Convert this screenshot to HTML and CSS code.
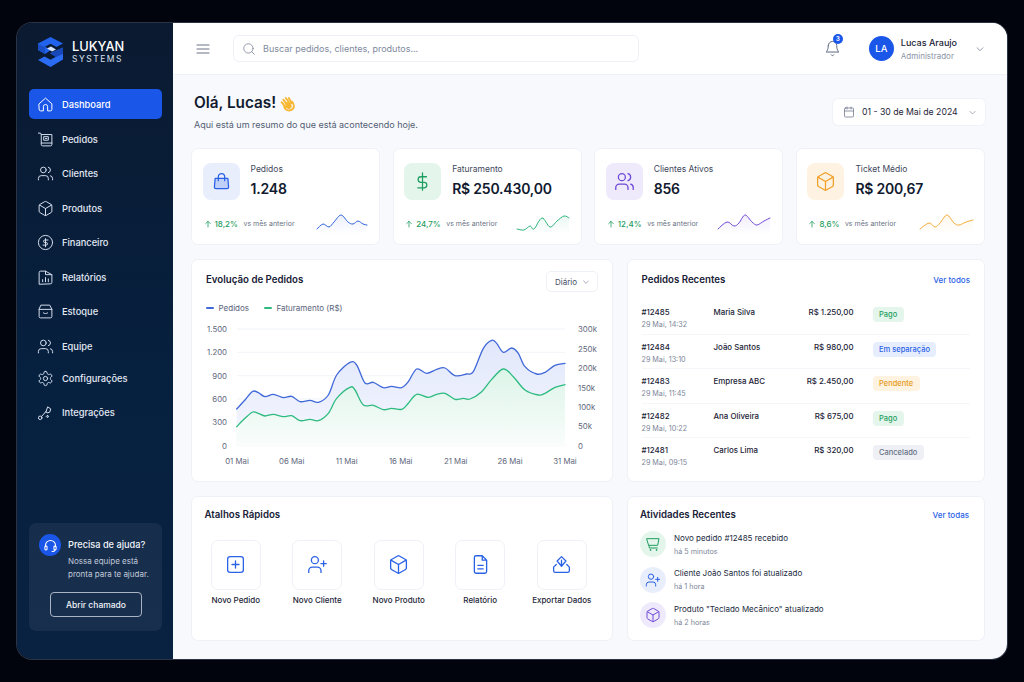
FILE: index.html
```html
<!DOCTYPE html>
<html lang="pt-BR">
<head>
  <meta charset="UTF-8">
  <meta name="viewport" content="width=device-width, initial-scale=1.0">
  <title>Lukyan Systems - Dashboard</title>
  <link rel="stylesheet" href="styles.css">
</head>
<body>
  <svg class="icon-defs" width="0" height="0" aria-hidden="true">
    <symbol id="i-home" viewBox="0 0 24 24"><path d="M3 11 12 3l9 8v8a2 2 0 0 1-2 2h-4v-6a3 3 0 0 0-6 0v6H5a2 2 0 0 1-2-2z"/></symbol>
    <symbol id="i-orders" viewBox="0 0 24 24"><path d="M2 3h3l1 2h15v14a2 2 0 0 1-2 2H8a2 2 0 0 1-2-2V5M6 17h15M10 8h6v5h-6zM12 10.500h2"/></symbol>
    <symbol id="i-users" viewBox="0 0 24 24"><path d="M16 21v-2a4 4 0 0 0-4-4H6a4 4 0 0 0-4 4v2"/><circle cx="9" cy="7" r="4"/><path d="M22 21v-2a4 4 0 0 0-3-3.870M16 3.130a4 4 0 0 1 0 7.750"/></symbol>
    <symbol id="i-box" viewBox="0 0 24 24"><path d="M21 8a2 2 0 0 0-1-1.730l-7-4a2 2 0 0 0-2 0l-7 4A2 2 0 0 0 3 8v8a2 2 0 0 0 1 1.730l7 4a2 2 0 0 0 2 0l7-4A2 2 0 0 0 21 16Z"/><path d="M3.300 7 12 12l8.700-5M12 22V12"/></symbol>
    <symbol id="i-money" viewBox="0 0 24 24"><circle cx="12" cy="12" r="10"/><path d="M15.500 8.500H11a1.800 1.800 0 0 0 0 3.600h2a1.800 1.800 0 0 1 0 3.600H8.500M12 18V6.500"/></symbol>
    <symbol id="i-report" viewBox="0 0 24 24"><path d="M3 21V5a2 2 0 0 1 2-2h7v5h9v11a2 2 0 0 1-2 2zM12 3l9 5M8 18v-3M12 18v-6M16 18v-4"/></symbol>
    <symbol id="i-stock" viewBox="0 0 24 24"><path d="M6 3h12l3 6v10a2 2 0 0 1-2 2H5a2 2 0 0 1-2-2V9zM3 9h18M9 14c1.500 1.300 4.500 1.300 6 0"/></symbol>
    <symbol id="i-gear" viewBox="0 0 24 24"><path d="M12.220 2h-.44a2 2 0 0 0-2 2v.18a2 2 0 0 1-1 1.730l-.43.25a2 2 0 0 1-2 0l-.15-.08a2 2 0 0 0-2.730.73l-.22.38a2 2 0 0 0 .73 2.730l.15.1a2 2 0 0 1 1 1.720v.51a2 2 0 0 1-1 1.740l-.15.09a2 2 0 0 0-.73 2.730l.22.38a2 2 0 0 0 2.730.73l.15-.08a2 2 0 0 1 2 0l.43.25a2 2 0 0 1 1 1.730V20a2 2 0 0 0 2 2h.44a2 2 0 0 0 2-2v-.18a2 2 0 0 1 1-1.730l.43-.25a2 2 0 0 1 2 0l.15.08a2 2 0 0 0 2.730-.73l.22-.39a2 2 0 0 0-.73-2.730l-.15-.08a2 2 0 0 1-1-1.740v-.5a2 2 0 0 1 1-1.740l.15-.09a2 2 0 0 0 .73-2.730l-.22-.38a2 2 0 0 0-2.730-.73l-.15.08a2 2 0 0 1-2 0l-.43-.25a2 2 0 0 1-1-1.730V4a2 2 0 0 0-2-2z"/><circle cx="12" cy="12" r="3"/></symbol>
    <symbol id="i-link" viewBox="0 0 24 24"><circle cx="4.500" cy="19.500" r="2.500"/><path d="m6.500 17.500 5-5.500M13 10l2-6 4.500 3-1.500 4.500-3.500 1zM16 17.500a1.300 1.300 0 1 0 0 .1M11.500 12l1.500-2"/></symbol>
    <symbol id="i-headset" viewBox="0 0 24 24"><path d="M4 14v-2a8 8 0 0 1 16 0v2"/><rect x="3" y="13" width="3.500" height="6" rx="1.500" class="solid"/><rect x="17.500" y="13" width="3.500" height="6" rx="1.500" class="solid"/><path d="M19 19c0 1.500-2 2.500-4.500 2.500"/></symbol>
    <symbol id="i-chevron" viewBox="0 0 24 24"><path d="m5 9 7 7 7-7"/></symbol>
    <symbol id="i-up" viewBox="0 0 24 24"><path d="M12 21V4M5 11l7-7 7 7"/></symbol>
    <symbol id="i-user-plus" viewBox="0 0 24 24"><path d="M16 21v-2a4 4 0 0 0-4-4H6a4 4 0 0 0-4 4v2"/><circle cx="9" cy="7" r="4"/><path d="M19 8v6M16 11h6"/></symbol>
    <symbol id="i-cart" viewBox="0 0 24 24"><path d="M3 4h18l-2 10H6zM6 14l.5 4h12"/><circle cx="8" cy="21" r=".6"/><circle cx="17" cy="21" r=".6"/></symbol>
  </svg>

  <div class="app">
    <aside class="sidebar">
      <div class="brand">
        <svg class="brand-mark" viewBox="0 0 25 30" aria-hidden="true">
          <path fill="#2163ec" d="M12.500 0 25 6.500 18.500 10 12.500 6.800 7 9.800 13 13 7 17 0 13V6.500z"/>
          <path fill="#1a4fc4" d="M0 7 7 10v7l-7-4z"/>
          <path fill="#2a6cf3" d="M25 10.500V22.500L12.500 30 0 23l6.500-3.500 6 3.300 5.500-3-6-3.500z"/>
          <path fill="#1847b8" d="M25 10.500v6.500l-7 3-6-3.500z"/>
          <path fill="#d7e5ff" d="M9 11.500 13 9.500l5 3-4 2z"/>
        </svg>
        <div class="brand-text">
          <div class="brand-name">LUKYAN</div>
          <div class="brand-sub">SYSTEMS</div>
        </div>
      </div>

      <nav class="nav">
        <a class="nav-item active"><svg class="icon"><use href="#i-home"/></svg>Dashboard</a>
        <a class="nav-item"><svg class="icon"><use href="#i-orders"/></svg>Pedidos</a>
        <a class="nav-item"><svg class="icon"><use href="#i-users"/></svg>Clientes</a>
        <a class="nav-item"><svg class="icon"><use href="#i-box"/></svg>Produtos</a>
        <a class="nav-item"><svg class="icon"><use href="#i-money"/></svg>Financeiro</a>
        <a class="nav-item"><svg class="icon"><use href="#i-report"/></svg>Relatórios</a>
        <a class="nav-item"><svg class="icon"><use href="#i-stock"/></svg>Estoque</a>
        <a class="nav-item"><svg class="icon"><use href="#i-users"/></svg>Equipe</a>
        <a class="nav-item tight"><svg class="icon"><use href="#i-gear"/></svg>Configurações</a>
        <a class="nav-item"><svg class="icon"><use href="#i-link"/></svg>Integrações</a>
      </nav>

      <div class="help">
        <div class="help-top">
          <span class="help-icon"><svg class="icon"><use href="#i-headset"/></svg></span>
          <div>
            <div class="help-title">Precisa de ajuda?</div>
            <p class="help-text">Nossa equipe está<br>pronta para te ajudar.</p>
          </div>
        </div>
        <button class="help-btn">Abrir chamado</button>
      </div>
    </aside>

    <div class="content">
      <header class="topbar">
        <svg class="menu-icon" viewBox="0 0 14 12" aria-hidden="true"><path d="M1 2h12M1 6h12M1 10h12"/></svg>
        <div class="search">
          <svg class="icon search-icon" viewBox="0 0 24 24"><circle cx="11" cy="11" r="8"/><path d="m21 21-4.300-4.300"/></svg>
          <span>Buscar pedidos, clientes, produtos...</span>
        </div>
        <div class="bell">
          <svg class="icon" viewBox="0 0 24 24"><path d="M6 8a6 6 0 0 1 12 0c0 7 3 9 3 9H3s3-2 3-9M10.300 21a1.940 1.940 0 0 0 3.400 0"/></svg>
          <span class="badge">3</span>
        </div>
        <div class="avatar">LA</div>
        <div class="user">
          <div class="user-name">Lucas Araujo</div>
          <div class="user-role">Administrador</div>
        </div>
        <svg class="icon chevron user-chevron"><use href="#i-chevron"/></svg>
      </header>

      <main class="main">
        <div class="page-head">
          <div>
            <h1>Olá, Lucas!
              <svg class="wave" viewBox="0 0 20 20" aria-hidden="true">
                <path class="wave-hand" d="M3 8.500 7.500 14M5 5.500l5.500 7M8 3.500l5 7M11.500 3.500l3.500 6M5 10l2 6c2 3 7 3.500 10-.5 1.500-3-.5-6-1.500-7.500"/>
                <path class="wave-palm" d="M7 8l7 1 1 5-3 3-4-2z"/>
              </svg>
            </h1>
            <p class="page-sub">Aqui está um resumo do que está acontecendo hoje.</p>
          </div>
          <div class="date-box">
            <svg class="icon" viewBox="0 0 24 24"><rect x="3" y="4" width="18" height="18" rx="2"/><path d="M16 2v4M8 2v4M3 10h18"/></svg>
            <span>01 - 30 de Mai de 2024</span>
            <svg class="icon chevron"><use href="#i-chevron"/></svg>
          </div>
        </div>

        <section class="kpis">
          <article class="card kpi">
            <div class="kpi-top">
              <span class="kpi-icon blue">
                <svg class="icon" viewBox="0 0 24 24"><path class="soft" d="M4 8h16l1 11a2 2 0 0 1-2 2H5a2 2 0 0 1-2-2z"/><path d="M8 11V6a4 4 0 0 1 8 0v5"/></svg>
              </span>
              <div>
                <div class="kpi-label">Pedidos</div>
                <div class="kpi-value">1.248</div>
              </div>
            </div>
            <div class="kpi-foot">
              <svg class="icon up"><use href="#i-up"/></svg>
              <span class="kpi-delta">18,2%</span><span class="kpi-note">vs mês anterior</span>
              <svg class="spark" id="spark-blue" viewBox="0 0 53 20"></svg>
            </div>
          </article>
          <article class="card kpi">
            <div class="kpi-top">
              <span class="kpi-icon green">
                <svg class="icon" viewBox="0 0 24 24"><path d="M17 6H10a3.500 3.500 0 0 0 0 7h4a3.500 3.500 0 0 1 0 7H6M12 23V1"/></svg>
              </span>
              <div>
                <div class="kpi-label">Faturamento</div>
                <div class="kpi-value">R$ 250.430,00</div>
              </div>
            </div>
            <div class="kpi-foot">
              <svg class="icon up"><use href="#i-up"/></svg>
              <span class="kpi-delta">24,7%</span><span class="kpi-note">vs mês anterior</span>
              <svg class="spark" id="spark-green" viewBox="0 0 53 20"></svg>
            </div>
          </article>
          <article class="card kpi">
            <div class="kpi-top">
              <span class="kpi-icon purple">
                <svg class="icon wide"><use href="#i-users"/></svg>
              </span>
              <div>
                <div class="kpi-label">Clientes Ativos</div>
                <div class="kpi-value">856</div>
              </div>
            </div>
            <div class="kpi-foot">
              <svg class="icon up"><use href="#i-up"/></svg>
              <span class="kpi-delta">12,4%</span><span class="kpi-note">vs mês anterior</span>
              <svg class="spark" id="spark-purple" viewBox="0 0 53 20"></svg>
            </div>
          </article>
          <article class="card kpi">
            <div class="kpi-top">
              <span class="kpi-icon orange">
                <svg class="icon wide"><use href="#i-box"/></svg>
              </span>
              <div>
                <div class="kpi-label">Ticket Médio</div>
                <div class="kpi-value">R$ 200,67</div>
              </div>
            </div>
            <div class="kpi-foot">
              <svg class="icon up"><use href="#i-up"/></svg>
              <span class="kpi-delta">8,6%</span><span class="kpi-note">vs mês anterior</span>
              <svg class="spark" id="spark-orange" viewBox="0 0 53 20"></svg>
            </div>
          </article>
        </section>

        <section class="panels">
          <article class="card chart-card">
            <div class="chart-head">
              <h2>Evolução de Pedidos</h2>
              <div class="select">Diário <svg class="icon chevron"><use href="#i-chevron"/></svg></div>
            </div>
            <div class="legend">
              <span class="legend-item"><i class="dash dash-blue"></i>Pedidos</span>
              <span class="legend-item"><i class="dash dash-green"></i>Faturamento (R$)</span>
            </div>
            <svg class="chart" id="chart" viewBox="206 320 392 150">
              <defs>
                <linearGradient id="fill-blue" x1="0" y1="0" x2="0" y2="1">
                  <stop offset="0" stop-color="#e1e7fb"/><stop offset="1" stop-color="#f5f7fe"/>
                </linearGradient>
                <linearGradient id="fill-green" x1="0" y1="0" x2="0" y2="1">
                  <stop offset="0" stop-color="#dcf4e8"/><stop offset="1" stop-color="#fafdfc"/>
                </linearGradient>
              </defs>
              <g class="grid">
                <path d="M237 329H565M237 352.300H565M237 375.700H565M237 399H565M237 422.300H565M237 445.700H565"/>
              </g>
              <g id="chart-series"></g>
              <g class="axis axis-left">
                <text x="227" y="332">1.500</text><text x="227" y="355.300">1.200</text><text x="227" y="378.700">900</text>
                <text x="227" y="402">600</text><text x="227" y="425.300">300</text><text x="227" y="448.700">0</text>
              </g>
              <g class="axis axis-right">
                <text x="578" y="332">300k</text><text x="578" y="351.700">250k</text><text x="578" y="371">200k</text>
                <text x="578" y="390.700">150k</text><text x="578" y="410">100k</text><text x="578" y="429">50k</text><text x="578" y="448.700">0</text>
              </g>
              <g class="axis axis-bottom">
                <text x="237" y="464">01 Mai</text><text x="291.700" y="464">06 Mai</text><text x="346.700" y="464">11 Mai</text>
                <text x="400.700" y="464">16 Mai</text><text x="455.700" y="464">21 Mai</text><text x="510" y="464">26 Mai</text><text x="565" y="464">31 Mai</text>
              </g>
            </svg>
          </article>

          <article class="card orders-card">
            <div class="card-head">
              <h2>Pedidos Recentes</h2>
              <a class="see-all">Ver todos</a>
            </div>
            <div class="order">
              <div><div class="order-id">#12485</div><div class="order-date">29 Mai, 14:32</div></div>
              <div class="order-name">Maria Silva</div>
              <div class="order-value">R$ 1.250,00</div>
              <span class="pill pill-green">Pago</span>
            </div>
            <div class="order">
              <div><div class="order-id">#12484</div><div class="order-date">29 Mai, 13:10</div></div>
              <div class="order-name">João Santos</div>
              <div class="order-value">R$ 980,00</div>
              <span class="pill pill-blue">Em separação</span>
            </div>
            <div class="order">
              <div><div class="order-id">#12483</div><div class="order-date">29 Mai, 11:45</div></div>
              <div class="order-name">Empresa ABC</div>
              <div class="order-value">R$ 2.450,00</div>
              <span class="pill pill-orange">Pendente</span>
            </div>
            <div class="order">
              <div><div class="order-id">#12482</div><div class="order-date">29 Mai, 10:22</div></div>
              <div class="order-name">Ana Oliveira</div>
              <div class="order-value">R$ 675,00</div>
              <span class="pill pill-green">Pago</span>
            </div>
            <div class="order">
              <div><div class="order-id">#12481</div><div class="order-date">29 Mai, 09:15</div></div>
              <div class="order-name">Carlos Lima</div>
              <div class="order-value">R$ 320,00</div>
              <span class="pill pill-gray">Cancelado</span>
            </div>
          </article>

          <article class="card shortcuts-card">
            <h2>Atalhos Rápidos</h2>
            <div class="shortcuts">
              <div class="shortcut">
                <span class="shortcut-icon"><svg class="icon" viewBox="0 0 24 24"><rect x="3" y="3" width="18" height="18" rx="3"/><path d="M12 8v8M8 12h8"/></svg></span>
                Novo Pedido
              </div>
              <div class="shortcut">
                <span class="shortcut-icon"><svg class="icon"><use href="#i-user-plus"/></svg></span>
                Novo Cliente
              </div>
              <div class="shortcut">
                <span class="shortcut-icon"><svg class="icon"><use href="#i-box"/></svg></span>
                Novo Produto
              </div>
              <div class="shortcut">
                <span class="shortcut-icon"><svg class="icon" viewBox="0 0 24 24"><path d="M14 2H7a2 2 0 0 0-2 2v16a2 2 0 0 0 2 2h10a2 2 0 0 0 2-2V7zM14 2v5h5M9 13h6M9 17h6"/></svg></span>
                Relatório
              </div>
              <div class="shortcut">
                <span class="shortcut-icon"><svg class="icon" viewBox="0 0 24 24"><path d="M3 15v4a2 2 0 0 0 2 2h14a2 2 0 0 0 2-2v-4l-3-3M6 12l-3 3M12 3l5 5-5 6-5-6zM12 7v7"/></svg></span>
                Exportar Dados
              </div>
            </div>
          </article>

          <article class="card activity-card">
            <div class="card-head">
              <h2>Atividades Recentes</h2>
              <a class="see-all">Ver todas</a>
            </div>
            <div class="activity">
              <span class="activity-icon green"><svg class="icon"><use href="#i-cart"/></svg></span>
              <div><div class="activity-title">Novo pedido #12485 recebido</div><div class="activity-time">há 5 minutos</div></div>
            </div>
            <div class="activity">
              <span class="activity-icon blue"><svg class="icon"><use href="#i-user-plus"/></svg></span>
              <div><div class="activity-title">Cliente João Santos foi atualizado</div><div class="activity-time">há 1 hora</div></div>
            </div>
            <div class="activity">
              <span class="activity-icon purple"><svg class="icon"><use href="#i-box"/></svg></span>
              <div><div class="activity-title">Produto "Teclado Mecânico" atualizado</div><div class="activity-time">há 2 horas</div></div>
            </div>
          </article>
        </section>
      </main>
    </div>
  </div>
  <script src="chart.js"></script>
</body>
</html>
```
FILE: styles.css
```css
* {
  box-sizing: border-box;
}
html, body {
  height: 100%;
}
body {
  margin: 0;
  padding: 23px 17px;
  overflow: hidden;
  background: #02040d;
  font-family: Inter, "Noto Sans", sans-serif;
  color: #111a2e;
}
h1, h2, p {
  margin: 0;
}
.icon-defs {
  position: absolute;
}
.icon {
  width: 16px;
  height: 16px;
  fill: none;
  stroke: currentColor;
  stroke-width: 1.7;
  stroke-linecap: round;
  stroke-linejoin: round;
  flex: none;
}
.chevron {
  width: 10px;
  height: 10px;
  color: #66708a;
}

.app {
  display: flex;
  width: 990px;
  height: 636px;
  border-radius: 15px;
  overflow: hidden;
  box-shadow: 0 0 0 1px #2b3445;
}

/* sidebar */
.sidebar {
  display: flex;
  flex-direction: column;
  width: 156px;
  flex: none;
  padding: 14px 11px 28px 12px;
  background: linear-gradient(180deg, #0b1a31 0%, #06203f 55%, #0a2242 100%);
  color: #e9eef8;
}
.brand {
  display: flex;
  align-items: center;
  gap: 9px;
  height: 30px;
  padding-left: 9px;
}
.brand-mark {
  width: 25px;
  height: 30px;
}
.brand-name {
  font-size: 12.800px;
  line-height: 14px;
  font-weight: 500;
  color: #fff;
}
.brand-sub {
  margin-top: 0;
  font-size: 8.500px;
  line-height: 10px;
  letter-spacing: 1.500px;
  color: #d8e0ee;
}
.nav {
  display: flex;
  flex-direction: column;
  margin-top: 22px;
}
.nav-item {
  display: flex;
  align-items: center;
  gap: 8px;
  height: 34.500px;
  padding-left: 8px;
  font-size: 9.300px;
  font-weight: 500;
  color: #e3e9f4;
  border-radius: 5px;
}
.nav-item .icon {
  width: 17px;
  height: 17px;
  stroke-width: 1.400;
  color: #d5deee;
}
.nav-item.active {
  height: 30px;
  margin-bottom: 3px;
  background: #1a56e8;
  color: #fff;
}
.nav-item.active .icon {
  color: #fff;
}
.nav-item.tight {
  margin-top: -2.500px;
}
.help {
  margin-top: auto;
  padding: 11px 10px 0;
  height: 108px;
  border-radius: 7px;
  background: rgba(255, 255, 255, .06);
}
.help-top {
  display: flex;
  gap: 7px;
}
.help-icon {
  display: flex;
  align-items: center;
  justify-content: center;
  width: 22px;
  height: 22px;
  flex: none;
  border-radius: 50%;
  background: #1a56e8;
  color: #fff;
}
.help-icon .icon {
  width: 15px;
  height: 15px;
}
.help-icon .solid {
  fill: #fff;
}
.help-title {
  margin-top: 4px;
  font-size: 9.200px;
  line-height: 14px;
  font-weight: 500;
  color: #f1f4fa;
  white-space: nowrap;
}
.help-text {
  margin-top: 3px;
  font-size: 8px;
  line-height: 13px;
  color: #c3cbdb;
  white-space: nowrap;
}
.help-btn {
  display: block;
  width: 92px;
  height: 25px;
  margin: 11px 0 0 11px;
  padding: 0;
  border: 1px solid #a8b3c6;
  border-radius: 4px;
  background: transparent;
  font-family: inherit;
  font-size: 8.500px;
  font-weight: 500;
  color: #f1f4fa;
}

/* top bar */
.content {
  flex: 1;
  display: flex;
  flex-direction: column;
  min-width: 0;
  background: #f7f9fd;
}
.topbar {
  display: flex;
  align-items: center;
  height: 52px;
  flex: none;
  padding: 0 22px 0 23px;
  background: #fff;
  border-bottom: 1px solid #eef1f6;
}
.menu-icon {
  width: 14px;
  height: 12px;
  fill: none;
  stroke: #6b7489;
  stroke-width: 1.200;
  stroke-linecap: round;
}
.search {
  display: flex;
  align-items: center;
  gap: 7px;
  width: 406px;
  height: 27px;
  margin-left: 23px;
  padding-left: 8px;
  border: 1px solid #eef0f5;
  border-radius: 6px;
  font-size: 9px;
  color: #808a9e;
}
.search-icon {
  width: 14px;
  height: 14px;
  stroke-width: 1.400;
  color: #7d879b;
}
.bell {
  position: relative;
  margin-left: 185px;
  height: 17px;
  color: #5c6780;
}
.bell .icon {
  display: block;
  width: 17px;
  height: 17px;
  stroke-width: 1.400;
}
.badge {
  position: absolute;
  top: -6px;
  left: 9px;
  width: 10px;
  height: 10px;
  border-radius: 50%;
  background: #1a56e8;
  color: #fff;
  font-size: 6.500px;
  line-height: 10px;
  font-weight: 600;
  text-align: center;
}
.avatar {
  width: 25px;
  height: 25px;
  margin-left: 28px;
  border-radius: 50%;
  background: #1a56e8;
  color: #fff;
  font-size: 9.500px;
  line-height: 25px;
  font-weight: 500;
  text-align: center;
}
.user {
  margin-left: 7px;
}
.user-name {
  font-size: 9px;
  line-height: 13px;
  font-weight: 500;
  color: #1b2336;
}
.user-role {
  margin-top: 2px;
  font-size: 8px;
  line-height: 11px;
  color: #8b94a7;
}
.user-chevron {
  margin-left: 18px;
}

/* main */
.main {
  flex: 1;
  min-height: 0;
  padding: 17px 22px 0 18px;
}
.page-head {
  display: flex;
  justify-content: space-between;
  align-items: flex-start;
  height: 55.500px;
  padding-left: 3px;
}
h1 {
  display: flex;
  align-items: center;
  gap: 3px;
  font-size: 15.300px;
  line-height: 22px;
  font-weight: 600;
}
.wave {
  width: 17px;
  height: 17px;
}
.wave-hand {
  fill: none;
  stroke: #f7b733;
  stroke-width: 2.200;
  stroke-linecap: round;
}
.wave-palm {
  fill: #f7b733;
}
.page-sub {
  margin-top: 4px;
  font-size: 9px;
  line-height: 14px;
  color: #535d72;
}
.date-box {
  display: flex;
  align-items: center;
  height: 26px;
  width: 152px;
  margin-top: 7px;
  padding: 0 8px 0 10px;
  border-radius: 5px;
  background: #fff;
  box-shadow: 0 0 0 1px #eff2f7;
  font-size: 8.700px;
  color: #1e2638;
  white-space: nowrap;
}
.date-box .icon {
  width: 12px;
  height: 12px;
  stroke-width: 1.500;
  color: #6b7489;
}
.date-box span {
  margin-left: 7px;
  flex: 1;
}
.date-box .chevron {
  width: 9px;
  height: 9px;
}
.card {
  background: #fff;
  border: 1px solid #eef1f6;
  border-radius: 7px;
}
.kpis {
  display: grid;
  grid-template-columns: repeat(4, 1fr);
  gap: 12.500px;
}
.kpi {
  height: 97.500px;
  padding: 14px 11px 0 10.500px;
}
.kpi-top {
  display: flex;
  gap: 11px;
}
.kpi-icon {
  display: flex;
  align-items: center;
  justify-content: center;
  width: 37px;
  height: 37px;
  border-radius: 8px;
  flex: none;
}
.blue { background: #e9eefc; color: #2a62e6; }
.green { background: #e4f6ec; color: #1f9d61; }
.purple { background: #efeafb; color: #6f49d8; }
.orange { background: #fef3e2; color: #f1a12c; }
.kpi-icon .icon {
  width: 19px;
  height: 19px;
  stroke-width: 1.600;
}
.kpi-icon .icon.wide {
  width: 21px;
  height: 21px;
  stroke-width: 1.500;
}
.soft {
  fill: rgba(42, 98, 230, .22);
}
.kpi-label {
  font-size: 8.500px;
  line-height: 12px;
  color: #3f485c;
}
.kpi-value {
  margin-top: 4px;
  font-size: 14px;
  line-height: 20px;
  font-weight: 600;
  letter-spacing: -.2px;
  color: #111a2e;
}
.kpi-foot {
  display: flex;
  align-items: center;
  height: 20px;
  margin-top: 14px;
}
.up {
  width: 8px;
  height: 8px;
  margin-left: 1px;
  stroke-width: 2.400;
  color: #1f9d61;
}
.kpi-delta {
  margin-left: 3px;
  font-size: 8px;
  font-weight: 500;
  color: #1f9d61;
}
.kpi-note {
  margin-left: 5.500px;
  font-size: 7px;
  color: #6a7386;
}
.spark {
  width: 53px;
  height: 20px;
  margin-left: auto;
  overflow: visible;
}

.panels {
  display: grid;
  grid-template-columns: 422px 358.500px;
  grid-template-rows: 223px 145px;
  gap: 14px 13.500px;
  margin-top: 14px;
}
h2 {
  font-size: 9.700px;
  line-height: 14px;
  font-weight: 600;
  color: #172036;
}
.chart-card {
  padding: 11px 14px 0;
}
.chart-head {
  display: flex;
  justify-content: space-between;
  align-items: flex-start;
}
.chart-head h2 {
  margin-top: 2px;
}
.select {
  display: flex;
  align-items: center;
  justify-content: space-between;
  width: 52px;
  height: 21px;
  padding: 0 7px 0 8px;
  border: 1px solid #eef1f6;
  border-radius: 5px;
  font-size: 8px;
  color: #475066;
}
.select .chevron {
  width: 8px;
  height: 8px;
}
.legend {
  display: flex;
  gap: 15px;
  margin-top: 10px;
  font-size: 8px;
  line-height: 12px;
  color: #59627a;
}
.legend-item {
  display: flex;
  align-items: center;
  gap: 4.500px;
}
.dash {
  width: 8px;
  height: 2px;
  border-radius: 1px;
}
.dash-blue { background: #3f68d8; }
.dash-green { background: #2dbb80; }
.chart {
  display: block;
  width: 392px;
  height: 150px;
  margin-top: 6px;
}
.grid path {
  fill: none;
  stroke: #f1f3f8;
  stroke-width: 1;
}
.axis text {
  font-size: 7.800px;
  fill: #5f687d;
}
.axis-left text { text-anchor: end; }
.axis-bottom text { text-anchor: middle; }
.line {
  fill: none;
  stroke-width: 1.300;
  stroke-linejoin: round;
  stroke-linecap: round;
}

.orders-card {
  padding: 13px 14px 0 14px;
}
.card-head {
  display: flex;
  justify-content: space-between;
  align-items: center;
  height: 14px;
}
.see-all {
  font-size: 8px;
  font-weight: 500;
  color: #2a62e6;
}
.order {
  display: grid;
  grid-template-columns: 72px 56px 84px 1fr;
  height: 34.500px;
  padding-top: 6px;
  border-bottom: 1px solid #f4f6fa;
}
.card-head + .order {
  margin-top: 13px;
}
.order:last-child {
  border-bottom: 0;
}
.order-id, .order-name, .order-value {
  font-size: 7.900px;
  line-height: 12px;
  font-weight: 500;
  color: #1b2336;
}
.order-value {
  text-align: right;
  white-space: nowrap;
}
.order-name {
  white-space: nowrap;
}
.order-date {
  margin-top: 1px;
  font-size: 7.200px;
  line-height: 12px;
  color: #7d8699;
}
.pill {
  justify-self: start;
  height: 15px;
  margin: 1px 0 0 19px;
  padding: 0 6.500px;
  border-radius: 4px;
  font-size: 7.500px;
  line-height: 15px;
  font-weight: 500;
  white-space: nowrap;
}
.pill-green { background: #e4f6ec; color: #1f9d61; }
.pill-blue { background: #e6eefd; color: #2a62e6; }
.pill-orange { background: #fef3e0; color: #e69a21; }
.pill-gray { background: #eef0f5; color: #667085; }

.shortcuts-card {
  padding: 11px 3px 0;
}
.shortcuts-card h2 {
  margin-left: 9.500px;
}
.shortcuts {
  display: grid;
  grid-template-columns: repeat(5, 81.500px);
  margin-top: 17.500px;
}
.shortcut {
  display: flex;
  flex-direction: column;
  align-items: center;
  gap: 4.500px;
  font-size: 8px;
  line-height: 12px;
  font-weight: 500;
  color: #1e2638;
  white-space: nowrap;
}
.shortcut-icon {
  display: flex;
  align-items: center;
  justify-content: center;
  width: 50px;
  height: 50px;
  border: 1px solid #eff1f6;
  border-radius: 7px;
  color: #2a62e6;
}
.shortcut-icon .icon {
  width: 21px;
  height: 21px;
  stroke-width: 1.500;
}

.activity-card {
  padding: 11px 15px 0 12.500px;
}
.activity {
  display: flex;
  align-items: center;
  gap: 8px;
  height: 26px;
  margin-bottom: 9.500px;
}
.card-head + .activity {
  margin-top: 9px;
}
.activity-icon {
  display: flex;
  align-items: center;
  justify-content: center;
  width: 26px;
  height: 26px;
  border-radius: 50%;
  flex: none;
}
.activity-icon .icon {
  width: 16px;
  height: 16px;
  stroke-width: 1.500;
}
.activity-title {
  font-size: 8px;
  line-height: 12px;
  color: #232b3e;
}
.activity-time {
  margin-top: 2px;
  font-size: 7.200px;
  line-height: 11px;
  color: #7d8699;
}
```
FILE: chart.js
```js
// smooth line through points (catmull-rom to bezier)
function smooth(pts) {
  let d = `M${pts[0][0]} ${pts[0][1]}`;
  for (let i = 0; i < pts.length - 1; i++) {
    const p0 = pts[i - 1] || pts[i];
    const p1 = pts[i];
    const p2 = pts[i + 1];
    const p3 = pts[i + 2] || p2;
    const c1x = p1[0] + (p2[0] - p0[0]) / 6;
    const c1y = p1[1] + (p2[1] - p0[1]) / 6;
    const c2x = p2[0] - (p3[0] - p1[0]) / 6;
    const c2y = p2[1] - (p3[1] - p1[1]) / 6;
    d += `C${c1x.toFixed(2)} ${c1y.toFixed(2)} ${c2x.toFixed(2)} ${c2y.toFixed(2)} ${p2[0].toFixed(2)} ${p2[1].toFixed(2)}`;
  }
  return d;
}

function addPath(parent, d, attrs) {
  const el = document.createElementNS('http://www.w3.org/2000/svg', 'path');
  el.setAttribute('d', d);
  Object.keys(attrs).forEach((k) => el.setAttribute(k, attrs[k]));
  parent.appendChild(el);
}

// main chart, points in the coordinates of the chart's viewBox
const toChart = (p) => [190 + p[0] / 3, 260 + p[1] / 3];

const pedidos = [[140,447],[165,420],[188,394],[205,398],[225,410],[250,403],[280,413],[305,409],[330,425],[360,421],[385,427],[415,405],[440,345],[480,307],[500,315],[525,369],[550,367],[580,383],[605,379],[635,383],[655,365],[680,327],[710,340],[740,328],[765,324],[795,347],[830,342],[850,335],[880,265],[905,241],[920,250],[940,277],[965,264],[985,280],[1005,320],[1040,342],[1065,337],[1095,316],[1125,310]].map(toChart);
const faturamento = [[140,500],[165,475],[188,456],[205,460],[225,468],[250,463],[280,470],[305,467],[330,482],[360,478],[385,482],[415,460],[440,415],[480,382],[495,390],[520,435],[550,436],[580,449],[605,445],[635,448],[655,430],[680,403],[715,412],[740,403],[765,400],[795,418],[820,415],[840,417],[875,395],[905,358],[940,327],[970,350],[1005,390],[1045,405],[1065,400],[1095,382],[1125,374]].map(toChart);

const series = document.getElementById('chart-series');
const floor = 'L565 445.7L236.67 445.7Z';
addPath(series, smooth(pedidos) + floor, { fill: 'url(#fill-blue)' });
addPath(series, smooth(faturamento) + floor, { fill: 'url(#fill-green)' });
addPath(series, smooth(pedidos), { class: 'line', stroke: '#3f68d8' });
addPath(series, smooth(faturamento), { class: 'line', stroke: '#2dbb80' });

// sparklines in the kpi cards
const sparks = {
  'spark-blue': { color: '#2f62dc', pts: [[2,15],[8,10],[14,13],[19,8],[26,1],[33,8],[38,10],[43,7],[48,10],[52,11]] },
  'spark-green': { color: '#2db57b', pts: [[0,15],[7,16],[13,12],[17,15],[25,4],[33,13],[40,7],[47,2],[52,4]] },
  'spark-purple': { color: '#6f49d8', pts: [[0,15],[9,8],[16,12],[21,9],[27,1],[34,8],[39,11],[46,7],[52,4]] },
  'spark-orange': { color: '#f2ad3a', pts: [[0,15],[9,9],[15,13],[20,9],[27,1],[34,9],[39,11],[46,8],[53,6]] }
};
Object.keys(sparks).forEach((id) => {
  const svg = document.getElementById(id);
  const { color, pts } = sparks[id];
  const gradId = id + '-fill';
  svg.innerHTML = `<defs><linearGradient id="${gradId}" x1="0" y1="0" x2="0" y2="1"><stop offset="0" stop-color="${color}" stop-opacity=".1"/><stop offset="1" stop-color="${color}" stop-opacity="0"/></linearGradient></defs>`;
  const last = pts[pts.length - 1];
  addPath(svg, smooth(pts) + `L${last[0]} 20L${pts[0][0]} 20Z`, { fill: `url(#${gradId})` });
  addPath(svg, smooth(pts), { class: 'line', stroke: color, style: 'stroke-width:1' });
});
```
